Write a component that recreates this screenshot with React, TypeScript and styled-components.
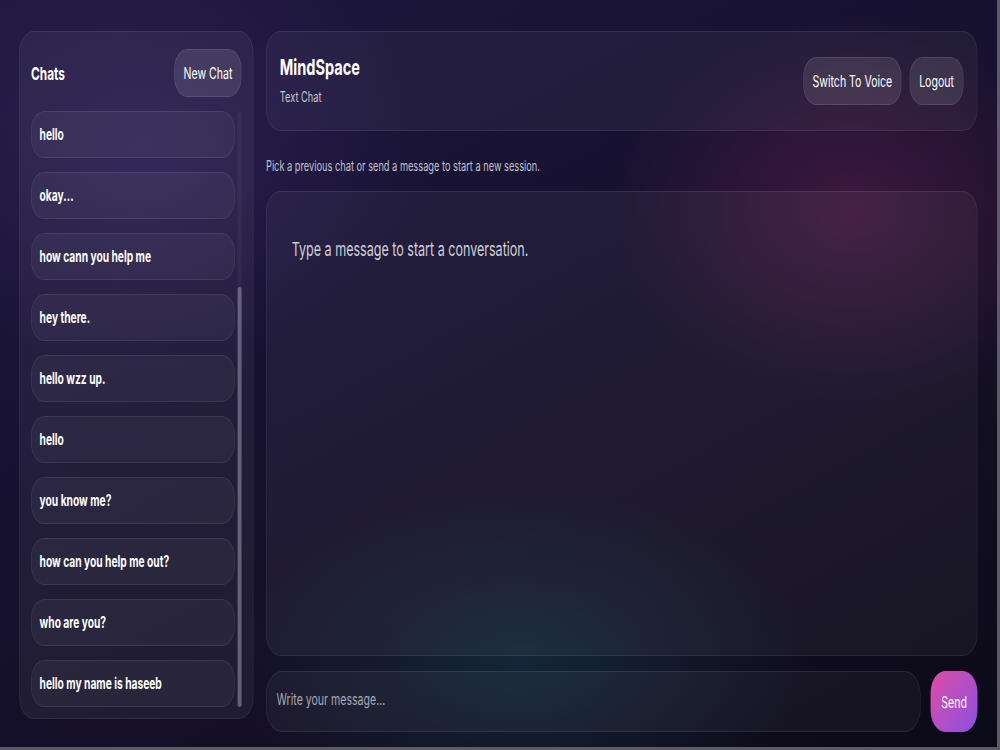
import styled, { createGlobalStyle } from 'styled-components';

// the screen is laid out at its native width and squeezed to fit the frame
const SQUEEZE = 0.66;
const NATIVE_W = Math.round(997 / SQUEEZE);

const chats = [
	'hello',
	'okay...',
	'how cann you help me',
	'hey there.',
	'hello wzz up.',
	'hello',
	'you know me?',
	'how can you help me out?',
	'who are you?',
	'hello my name is haseeb',
];

const GlobalStyle = createGlobalStyle`
	html, body {
		margin: 0;
		padding: 0;
		height: 100%;
	}
	body {
		font-family: Inter, 'Noto Sans', sans-serif;
		color: #ffffff;
		background: #0d0b1c;
	}
	* {
		box-sizing: border-box;
	}
`;

const App = () => {
	return (
		<>
			<GlobalStyle />
			<Frame>
				<Page style={{ width: NATIVE_W, transform: `scaleX(${SQUEEZE})` }}>
					<Sidebar>
						<SidebarHeader>
							<SidebarTitle>Chats</SidebarTitle>
							<GhostButton $w={102}>New Chat</GhostButton>
						</SidebarHeader>
						<ChatListWrap>
							<ChatList>
								{chats.map((c, i) => (
									<ChatItem key={i}>{c}</ChatItem>
								))}
							</ChatList>
							<ScrollTrack>
								<ScrollThumb />
							</ScrollTrack>
						</ChatListWrap>
					</Sidebar>
					<Main>
						<HeaderCard>
							<TitleBlock>
								<AppTitle>MindSpace</AppTitle>
								<AppSub>Text Chat</AppSub>
							</TitleBlock>
							<HeaderActions>
								<GhostButton $w={149}>Switch To Voice</GhostButton>
								<GhostButton $w={82}>Logout</GhostButton>
							</HeaderActions>
						</HeaderCard>
						<Hint>Pick a previous chat or send a message to start a new session.</Hint>
						<MessagesCard>
							<EmptyText>Type a message to start a conversation.</EmptyText>
						</MessagesCard>
						<Composer>
							<MessageInput placeholder="Write your message..." />
							<SendButton>Send</SendButton>
						</Composer>
					</Main>
				</Page>
			</Frame>
		</>
	);
};

const Frame = styled.div`
	width: 1000px;
	height: 750px;
	overflow: hidden;
	border-right: 3px solid #5b5a66;
	border-bottom: 3px solid #5b5a66;
	background: #0d0b1c;
`;

const Page = styled.div`
	height: 747px;
	display: flex;
	align-items: flex-start;
	gap: 19px;
	padding: 31px 30px 15px 29px;
	transform-origin: top left;
	background:
		radial-gradient(ellipse 520px 280px at 1290px 210px, rgba(95, 30, 80, 0.55), transparent 70%),
		radial-gradient(ellipse 620px 240px at 790px 660px, rgba(20, 58, 72, 0.55), transparent 70%),
		radial-gradient(ellipse 620px 320px at 220px 150px, rgba(60, 40, 110, 0.45), transparent 70%),
		linear-gradient(160deg, #1f1840 0%, #171230 40%, #140f24 70%, #0b0a17 100%);
`;

const Card = styled.div`
	background: rgba(255, 255, 255, 0.045);
	border: 1px solid rgba(255, 255, 255, 0.08);
	border-radius: 22px;
`;

const Sidebar = styled(Card)`
	width: 355px;
	flex-shrink: 0;
	height: 688px;
	display: flex;
	flex-direction: column;
	padding: 17px 17px 11px 17px;
	background: rgba(255, 255, 255, 0.05);
`;

const SidebarHeader = styled.div`
	display: flex;
	justify-content: space-between;
	align-items: center;
	margin-bottom: 14px;
`;

const SidebarTitle = styled.div`
	font-size: 18px;
	font-weight: bold;
`;

const GhostButton = styled.button<{ $w: number }>`
	width: ${(props) => props.$w}px;
	height: 48px;
	padding: 0;
	border-radius: 20px;
	border: 1px solid rgba(255, 255, 255, 0.1);
	background: rgba(255, 255, 255, 0.1);
	color: #ffffff;
	font-family: inherit;
	font-size: 16px;
	cursor: pointer;
`;

const ChatListWrap = styled.div`
	flex: 1;
	display: flex;
	gap: 4px;
	min-height: 0;
`;

const ChatList = styled.div`
	flex: 1;
	display: flex;
	flex-direction: column;
	gap: 14px;
	overflow: hidden;
`;

const ChatItem = styled.div`
	flex: 0 0 47px;
	display: flex;
	align-items: center;
	padding: 0 12px;
	border-radius: 20px;
	border: 1px solid rgba(255, 255, 255, 0.08);
	background: rgba(255, 255, 255, 0.045);
	font-size: 15.5px;
	font-weight: bold;
`;

const ScrollTrack = styled.div`
	width: 6px;
	display: flex;
	flex-direction: column;
	justify-content: flex-end;
	background: rgba(255, 255, 255, 0.04);
	border-radius: 3px;
`;

const ScrollThumb = styled.div`
	height: 420px;
	border-radius: 3px;
	background: rgba(170, 170, 200, 0.45);
`;

const Main = styled.div`
	flex: 1;
	align-self: stretch;
	display: flex;
	flex-direction: column;
`;

const HeaderCard = styled(Card)`
	height: 100px;
	display: flex;
	justify-content: space-between;
	align-items: center;
	padding: 0 20px;
`;

const TitleBlock = styled.div`
	display: flex;
	flex-direction: column;
	gap: 8px;
	margin-top: -3px;
`;

const AppTitle = styled.div`
	font-size: 22px;
	font-weight: bold;
`;

const AppSub = styled.div`
	font-size: 14px;
	color: #c9c7d2;
`;

const HeaderActions = styled.div`
	display: flex;
	gap: 12px;
`;

const Hint = styled.div`
	font-size: 14px;
	color: #c2c0cc;
	padding: 26px 0 17px;
`;

const MessagesCard = styled(Card)`
	flex: 1;
	padding: 46px 38px;
`;

const EmptyText = styled.div`
	font-size: 19px;
	color: #d0ced9;
`;

const Composer = styled.div`
	display: flex;
	gap: 15px;
	margin-top: 15px;
	height: 61px;
`;

const MessageInput = styled.input`
	flex: 1;
	height: 100%;
	padding: 0 15px 6px;
	border-radius: 24px;
	border: 1px solid rgba(255, 255, 255, 0.08);
	background: rgba(255, 255, 255, 0.04);
	color: #ffffff;
	font-family: inherit;
	font-size: 16px;
	outline: none;
	&::placeholder {
		color: #a9a7b4;
	}
`;

const SendButton = styled.button`
	width: 71px;
	height: 100%;
	border: none;
	border-radius: 22px;
	background: linear-gradient(135deg, #e04ba6 0%, #b04fc8 55%, #8a50e2 100%);
	color: #ffffff;
	font-family: inherit;
	font-size: 16px;
	cursor: pointer;
`;

export default App;
